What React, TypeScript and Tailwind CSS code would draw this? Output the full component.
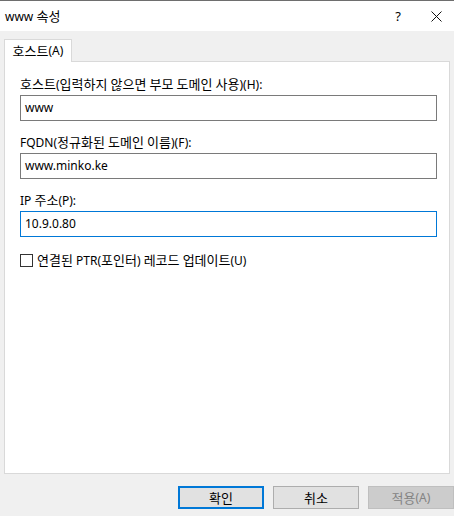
const font = "font-['Segoe_UI','Noto_Sans','Noto_Sans_CJK_KR',sans-serif]";

// Malgun Gothic draws hangul a bit larger than the latin glyphs, so runs of hangul get 13px
function T({ text }: { text: string }) {
  const parts = text.split(/([\uAC00-\uD7A3]+)/);
  return (
    <>
      {parts.map((p, i) =>
        /[\uAC00-\uD7A3]/.test(p) ? (
          <span key={i} className="text-[13px]">
            {p}
          </span>
        ) : (
          <span key={i}>{p}</span>
        )
      )}
    </>
  );
}

function Field({ label, value, focused }: { label: string; value: string; focused?: boolean }) {
  return (
    <div className="flex flex-col">
      <div className="h-[16px] leading-[16px] text-[12px] text-black whitespace-nowrap">
        <T text={label} />
      </div>
      <div
        className={
          'mt-[3px] h-[26px] w-[417px] bg-white flex items-center px-[4px] text-[12px] leading-[16px] text-black border ' +
          (focused ? 'border-[#0078d7]' : 'border-[#7a7a7a]')
        }
      >
        {value}
      </div>
    </div>
  );
}

function Btn({ label, primary, disabled }: { label: string; primary?: boolean; disabled?: boolean }) {
  let cls = 'w-[86px] h-[23px] flex items-center justify-center text-[12px] leading-[16px] ';
  if (disabled) cls += 'bg-[#cccccc] border border-[#bfbfbf] text-[#838383]';
  else if (primary) cls += 'bg-[#e1e1e1] border-2 border-[#0078d7] text-black';
  else cls += 'bg-[#e1e1e1] border border-[#adadad] text-black';
  return (
    <div className={cls}>
      <T text={label} />
    </div>
  );
}

export default function App() {
  return (
    <div className={`w-[454px] h-[516px] flex flex-col bg-[#f0f0f0] overflow-hidden ${font}`}>
      {/* Title bar */}
      <div className="h-[31px] shrink-0 bg-white border-t border-[#6e6e6e] flex items-center">
        <span className="ml-[5px] text-[12px] leading-[16px] text-black">
          <T text="www 속성" />
        </span>
        <span className="ml-auto mr-[30px] text-[13px] leading-[16px] text-black">?</span>
        <svg className="mr-[12px]" width="11" height="11" viewBox="0 0 11 11">
          <path d="M0.5 0.5 L10.5 10.5 M10.5 0.5 L0.5 10.5" stroke="#111" strokeWidth="1" fill="none" />
        </svg>
      </div>

      {/* Tabs */}
      <div className="mt-[8px] ml-[4px] flex">
        <div className="relative z-10 -mb-px w-[68px] h-[23px] bg-white border border-b-0 border-[#d9d9d9] flex items-center justify-center text-[12px] leading-[16px] text-black">
          <T text="호스트(A)" />
        </div>
      </div>

      {/* Panel */}
      <div className="ml-[4px] w-[446px] h-[413px] bg-white border border-[#d9d9d9] pt-[14px] pl-[15px] flex flex-col">
        <Field label="호스트(입력하지 않으면 부모 도메인 사용)(H):" value="www" />
        <div className="h-[13px]" />
        <Field label="FQDN(정규화된 도메인 이름)(F):" value="www.minko.ke" />
        <div className="h-[13px]" />
        <Field label="IP 주소(P):" value="10.9.0.80" focused />
        <div className="mt-[15px] flex items-center h-[16px]">
          <div className="w-[13px] h-[13px] border border-[#333333] bg-white" />
          <span className="ml-[4px] text-[12px] leading-[16px] text-black whitespace-nowrap">
            <T text="연결된 PTR(포인터) 레코드 업데이트(U)" />
          </span>
        </div>
      </div>

      {/* Buttons */}
      <div className="mt-[12px] ml-[178px] flex gap-[9px]">
        <Btn label="확인" primary />
        <Btn label="취소" />
        <Btn label="적용(A)" disabled />
      </div>
    </div>
  );
}
